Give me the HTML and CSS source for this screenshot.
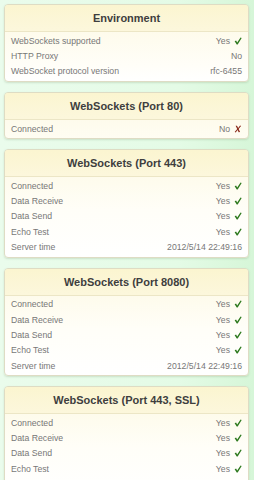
FILE: index.html
```html
<!DOCTYPE html>
<html>
<head>
<meta charset="utf-8">
<link rel="stylesheet" href="styles.css">
</head>
<body>
<div class="page">
  <section class="card">
    <h2 class="card-title">Environment</h2>
    <div class="card-body">
      <div class="row"><span class="label">WebSockets supported</span><span class="value">Yes <svg class="ok" viewBox="0 0 10 10"><path d="M0.8 5.4 L3.4 9.4 L4.6 9.4 L9.6 1.2 L8.2 0.6 L4 7 L2.6 4.4 Z"/></svg></span></div>
      <div class="row"><span class="label">HTTP Proxy</span><span class="value">No</span></div>
      <div class="row"><span class="label">WebSocket protocol version</span><span class="value">rfc-6455</span></div>
    </div>
  </section>

  <section class="card">
    <h2 class="card-title">WebSockets (Port 80)</h2>
    <div class="card-body">
      <div class="row"><span class="label">Connected</span><span class="value">No <svg class="fail" viewBox="0 0 10 10"><path d="M2 1 L3.8 0.8 L5.2 3.8 L7.6 0.6 L8.8 1.2 L5.8 5 L7.6 8.8 L5.8 9.2 L4.6 6.2 L2 9.4 L0.8 8.8 L4 5 Z"/></svg></span></div>
    </div>
  </section>

  <section class="card">
    <h2 class="card-title">WebSockets (Port 443)</h2>
    <div class="card-body">
      <div class="row"><span class="label">Connected</span><span class="value">Yes <svg class="ok" viewBox="0 0 10 10"><path d="M0.8 5.4 L3.4 9.4 L4.6 9.4 L9.6 1.2 L8.2 0.6 L4 7 L2.6 4.4 Z"/></svg></span></div>
      <div class="row"><span class="label">Data Receive</span><span class="value">Yes <svg class="ok" viewBox="0 0 10 10"><path d="M0.8 5.4 L3.4 9.4 L4.6 9.4 L9.6 1.2 L8.2 0.6 L4 7 L2.6 4.4 Z"/></svg></span></div>
      <div class="row"><span class="label">Data Send</span><span class="value">Yes <svg class="ok" viewBox="0 0 10 10"><path d="M0.8 5.4 L3.4 9.4 L4.6 9.4 L9.6 1.2 L8.2 0.6 L4 7 L2.6 4.4 Z"/></svg></span></div>
      <div class="row"><span class="label">Echo Test</span><span class="value">Yes <svg class="ok" viewBox="0 0 10 10"><path d="M0.8 5.4 L3.4 9.4 L4.6 9.4 L9.6 1.2 L8.2 0.6 L4 7 L2.6 4.4 Z"/></svg></span></div>
      <div class="row"><span class="label">Server time</span><span class="value">2012/5/14 22:49:16</span></div>
    </div>
  </section>

  <section class="card">
    <h2 class="card-title">WebSockets (Port 8080)</h2>
    <div class="card-body">
      <div class="row"><span class="label">Connected</span><span class="value">Yes <svg class="ok" viewBox="0 0 10 10"><path d="M0.8 5.4 L3.4 9.4 L4.6 9.4 L9.6 1.2 L8.2 0.6 L4 7 L2.6 4.4 Z"/></svg></span></div>
      <div class="row"><span class="label">Data Receive</span><span class="value">Yes <svg class="ok" viewBox="0 0 10 10"><path d="M0.8 5.4 L3.4 9.4 L4.6 9.4 L9.6 1.2 L8.2 0.6 L4 7 L2.6 4.4 Z"/></svg></span></div>
      <div class="row"><span class="label">Data Send</span><span class="value">Yes <svg class="ok" viewBox="0 0 10 10"><path d="M0.8 5.4 L3.4 9.4 L4.6 9.4 L9.6 1.2 L8.2 0.6 L4 7 L2.6 4.4 Z"/></svg></span></div>
      <div class="row"><span class="label">Echo Test</span><span class="value">Yes <svg class="ok" viewBox="0 0 10 10"><path d="M0.8 5.4 L3.4 9.4 L4.6 9.4 L9.6 1.2 L8.2 0.6 L4 7 L2.6 4.4 Z"/></svg></span></div>
      <div class="row"><span class="label">Server time</span><span class="value">2012/5/14 22:49:16</span></div>
    </div>
  </section>

  <section class="card">
    <h2 class="card-title">WebSockets (Port 443, SSL)</h2>
    <div class="card-body">
      <div class="row"><span class="label">Connected</span><span class="value">Yes <svg class="ok" viewBox="0 0 10 10"><path d="M0.8 5.4 L3.4 9.4 L4.6 9.4 L9.6 1.2 L8.2 0.6 L4 7 L2.6 4.4 Z"/></svg></span></div>
      <div class="row"><span class="label">Data Receive</span><span class="value">Yes <svg class="ok" viewBox="0 0 10 10"><path d="M0.8 5.4 L3.4 9.4 L4.6 9.4 L9.6 1.2 L8.2 0.6 L4 7 L2.6 4.4 Z"/></svg></span></div>
      <div class="row"><span class="label">Data Send</span><span class="value">Yes <svg class="ok" viewBox="0 0 10 10"><path d="M0.8 5.4 L3.4 9.4 L4.6 9.4 L9.6 1.2 L8.2 0.6 L4 7 L2.6 4.4 Z"/></svg></span></div>
      <div class="row"><span class="label">Echo Test</span><span class="value">Yes <svg class="ok" viewBox="0 0 10 10"><path d="M0.8 5.4 L3.4 9.4 L4.6 9.4 L9.6 1.2 L8.2 0.6 L4 7 L2.6 4.4 Z"/></svg></span></div>
      <div class="row"><span class="label">Server time</span><span class="value">2012/5/14 22:49:16</span></div>
    </div>
  </section>
</div>
</body>
</html>
```

FILE: styles.css
```css
html, body {
  margin: 0;
  padding: 0;
}
body {
  background: linear-gradient(to right, #eafcec 0%, #e4fbe6 70%, #d6f6d8 100%);
  font-family: "Liberation Sans", Arial, sans-serif;
  min-height: 480px;
}
.page {
  padding: 4px 5px 0 4px;
  display: flex;
  flex-direction: column;
  gap: 10px;
}
.card {
  border: 1px solid #dedcc4;
  border-radius: 4px;
  background: linear-gradient(to bottom, #fdf9e2 0px, #fffef8 60px, #ffffff 100%);
  box-shadow: 0 1px 2px rgba(120, 150, 110, 0.25);
  overflow: hidden;
}
.card-title {
  margin: 0;
  height: 26px;
  line-height: 27px;
  text-align: center;
  font-size: 11px;
  font-weight: bold;
  color: #3e3e3e;
  background: linear-gradient(to bottom, #fbf5d0 0%, #fcf7dc 100%);
  border-bottom: 1px solid #ece6c6;
}
.card-body {
  padding: 1px 0 2px;
}
.row {
  display: flex;
  justify-content: space-between;
  align-items: center;
  height: 15.3px;
  padding: 0 6px 0 6px;
  font-size: 8.7px;
  color: #777;
}
.value {
  display: flex;
  align-items: center;
  gap: 4px;
}
.ok, .fail {
  width: 8px;
  height: 8px;
}
.ok {
  fill: #2e7a1f;
}
.fail {
  fill: #8a2a1a;
}
```
